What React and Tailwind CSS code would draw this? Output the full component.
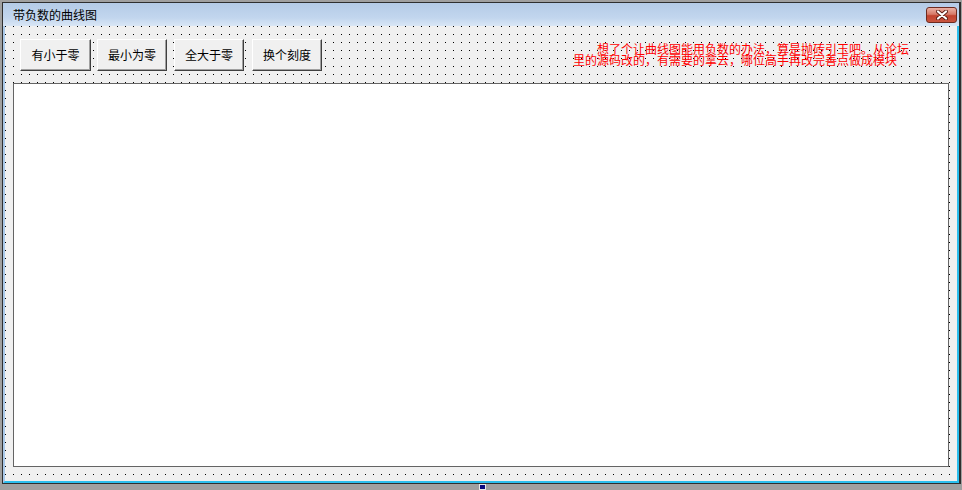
import React from "react";

const dots =
  "bg-[#f0f0f0] bg-[image:conic-gradient(from_270deg_at_1px_1px,#000_90deg,transparent_0)] bg-[size:8px_8px]";

function Btn({ children, className = "" }) {
  return (
    <div
      className={
        "flex h-[32px] items-center justify-center border-t border-l border-t-white border-l-white border-r border-b border-r-[#404040] border-b-[#404040] bg-[#f0f0f0] text-[12px] leading-none text-black shadow-[inset_-1px_-1px_0_#a0a0a0] " +
        className
      }
    >
      {children}
    </div>
  );
}

export default function App() {
  return (
    <div className="h-[490px] w-[962px] overflow-hidden bg-[#a0a0a0] font-['Noto_Sans_CJK_SC','Noto_Sans',sans-serif]">
      <div className="ml-[2px] mt-[2px] flex h-[482px] w-[959px] flex-col border-t border-l border-b border-r-2 border-[#2f2f2f]">
        {/* title bar */}
        <div className="flex h-[23px] shrink-0 items-center justify-between bg-[linear-gradient(to_bottom,#b4cbe7_0%,#c2d6ee_65%,#d9e6f5_100%)]">
          <span className="pl-[10px] text-[12px] leading-none text-black">带负数的曲线图</span>
          <div className="mr-[2px] flex h-[16px] w-[31px] items-center justify-center rounded-[3px] border border-[#6e2b20] bg-[linear-gradient(to_bottom,#eab1a4_0%,#d77a68_45%,#c2432f_55%,#c9553f_100%)]">
            <svg width="12" height="10" viewBox="0 0 12 10">
              <path d="M2 1.5 L10 8.5 M10 1.5 L2 8.5" stroke="#5a1d14" strokeWidth="4" strokeLinecap="round" />
              <path d="M2 1.5 L10 8.5 M10 1.5 L2 8.5" stroke="#ffffff" strokeWidth="2.2" strokeLinecap="round" />
            </svg>
          </div>
        </div>
        {/* client */}
        <div className="flex grow border-l-2 border-r-2 border-b-2 border-l-[#a9c8e8] border-r-[#2bbfee] border-b-[#2bbfee]">
          <div className={"flex grow flex-col " + dots}>
            <div className="mt-[13px] flex items-start pl-[15px]">
              <Btn className="w-[71px]">有小于零</Btn>
              <Btn className="ml-[6px] w-[70px]">最小为零</Btn>
              <Btn className="ml-[7px] w-[70px]">全大于零</Btn>
              <Btn className="ml-[8px] w-[70px]">换个刻度</Btn>
              <div className="ml-[251px] mt-[4px] text-[12px] leading-[11px] text-[#ff0000] whitespace-nowrap">
                <div className="pl-[24px]">想了个让曲线图能用负数的办法，算是抛砖引玉吧。从论坛</div>
                <div>里的源码改的，有需要的拿去，哪位高手再改完善点做成模块</div>
              </div>
            </div>
            <div className="ml-[8px] mt-[12px] h-[384px] w-[936px] border border-[#646464] bg-white" />
          </div>
        </div>
      </div>
      <div className="ml-[479px] h-[6px] w-[7px] border border-[#e8e8e8] bg-[#0a0a7e]" />
    </div>
  );
}
